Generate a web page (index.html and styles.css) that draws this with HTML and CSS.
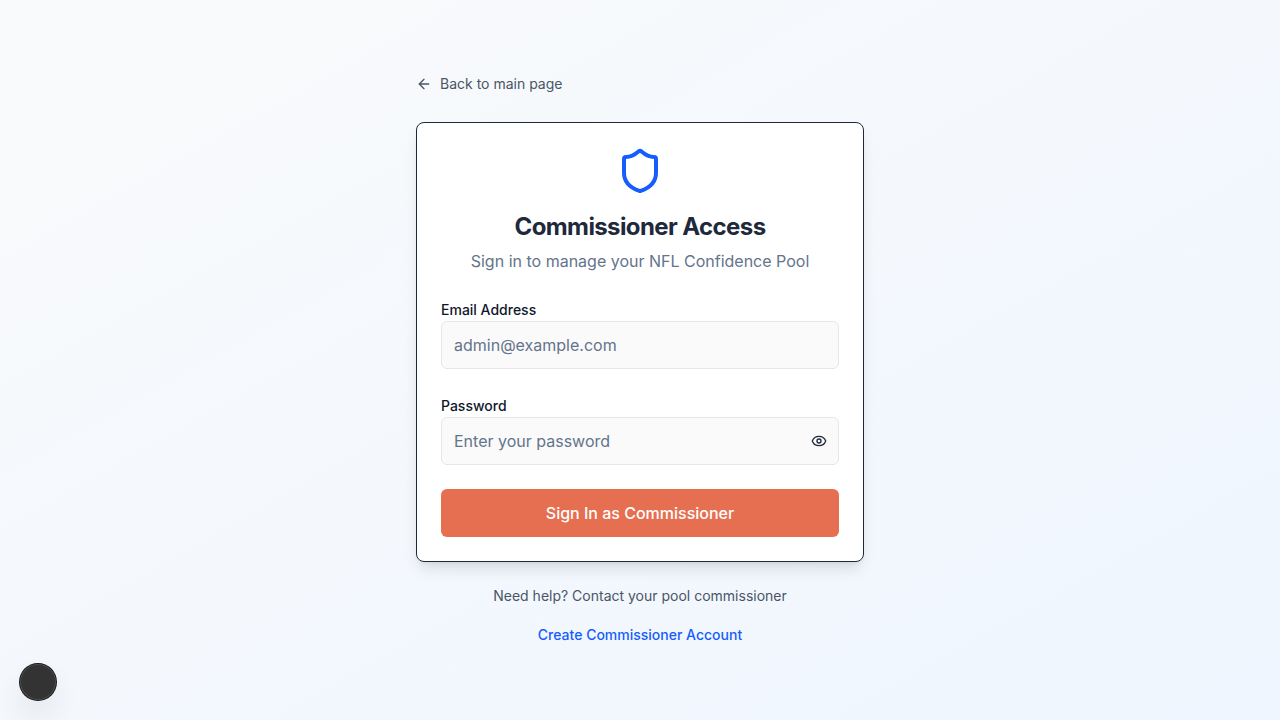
FILE: index.html
```html
<!DOCTYPE html>
<html lang="en">
<head>
<meta charset="utf-8">
<meta name="viewport" content="width=device-width, initial-scale=1">
<title>Commissioner Access</title>
<link rel="stylesheet" href="styles.css">
</head>
<body>
<main class="page">
  <div class="column">
    <a class="back-link" href="#">
      <svg class="icon" viewBox="0 0 24 24" aria-hidden="true"><path d="m12 19-7-7 7-7"/><path d="M19 12H5"/></svg>
      Back to main page
    </a>
    <section class="card">
      <header class="card-header">
        <svg class="shield" viewBox="0 0 24 24" aria-hidden="true"><path d="M20 13c0 5-3.5 7.5-7.66 8.95a1 1 0 0 1-.67-.01C7.5 20.5 4 18 4 13V6a1 1 0 0 1 1-1c2 0 4.5-1.2 6.24-2.72a1.17 1.17 0 0 1 1.52 0C14.51 3.81 17 5 19 5a1 1 0 0 1 1 1z"/></svg>
        <h1 class="title">Commissioner Access</h1>
        <p class="subtitle">Sign in to manage your NFL Confidence Pool</p>
      </header>
      <form class="form">
        <div class="field">
          <label class="label" for="email">Email Address</label>
          <input class="input" id="email" type="email" placeholder="admin@example.com">
        </div>
        <div class="field">
          <label class="label" for="password">Password</label>
          <div class="password-wrap">
            <input class="input input-password" id="password" type="password" placeholder="Enter your password">
            <button class="reveal" type="button" aria-label="Show password">
              <svg class="icon" viewBox="0 0 24 24" aria-hidden="true"><path d="M2.062 12.348a1 1 0 0 1 0-.696 10.75 10.75 0 0 1 19.876 0 1 1 0 0 1 0 .696 10.75 10.75 0 0 1-19.876 0"/><circle cx="12" cy="12" r="3"/></svg>
            </button>
          </div>
        </div>
        <button class="submit" type="submit">Sign In as Commissioner</button>
      </form>
    </section>
    <footer class="help">
      <p class="help-text">Need help? Contact your pool commissioner</p>
      <a class="create-link" href="#">Create Commissioner Account</a>
    </footer>
  </div>
</main>
<button class="floating" type="button" aria-label="Open tools"></button>
</body>
</html>
```

FILE: styles.css
```css
* {
  box-sizing: border-box;
  margin: 0;
}

body {
  font-family: Inter, "Liberation Sans", sans-serif;
  font-size: 16px;
  line-height: 24px;
  color: #1e293b;
}

.page {
  min-height: 100vh;
  display: flex;
  align-items: center;
  justify-content: center;
  padding: 16px 16px 18px;
  background: linear-gradient(to bottom right, #f9fafb, #eff6ff);
}

.column {
  width: 100%;
  max-width: 448px;
}

.icon {
  width: 16px;
  height: 16px;
  flex: none;
  fill: none;
  stroke: currentColor;
  stroke-width: 2;
  stroke-linecap: round;
  stroke-linejoin: round;
}

.back-link {
  display: flex;
  align-items: center;
  gap: 8px;
  width: fit-content;
  margin-bottom: 28px;
  font-size: 14px;
  line-height: 20px;
  color: #4a5565;
  text-decoration: none;
}

.card {
  padding: 24px;
  border: 1px solid #1e293b;
  border-radius: 8px;
  background: #fff;
  box-shadow: 0 10px 15px -3px rgb(0 0 0 / 10%), 0 4px 6px -4px rgb(0 0 0 / 10%);
}

.card-header {
  display: flex;
  flex-direction: column;
  align-items: center;
  text-align: center;
  margin-bottom: 24px;
}

.shield {
  width: 48px;
  height: 48px;
  margin-bottom: 16px;
  fill: none;
  stroke: #155dfc;
  stroke-width: 2;
  stroke-linecap: round;
  stroke-linejoin: round;
}

.title {
  margin-bottom: 6px;
  font-size: 24px;
  line-height: 32px;
  font-weight: 700;
  letter-spacing: -0.6px;
}

.subtitle {
  color: #64748b;
}

.form {
  display: flex;
  flex-direction: column;
  gap: 24px;
}

.label {
  font-size: 14px;
  line-height: 14px;
  font-weight: 500;
  color: #0f172a;
}

.input {
  display: block;
  width: 100%;
  height: 48px;
  padding: 8px 12px;
  border: 1px solid #e2e8f0;
  border-radius: 6px;
  background: #fafafa;
  font: inherit;
  color: inherit;
}

.input::placeholder {
  color: #64748b;
  opacity: 1;
}

.input-password {
  padding-right: 40px;
}

.password-wrap {
  position: relative;
}

.reveal {
  position: absolute;
  inset: 0 0 0 auto;
  display: flex;
  align-items: center;
  padding: 0 12px;
  border: 0;
  background: transparent;
  color: inherit;
}

.submit {
  height: 48px;
  border: 0;
  border-radius: 6px;
  background: #e76f51;
  color: #fff;
  font: inherit;
  font-weight: 500;
}

.help {
  display: flex;
  flex-direction: column;
  align-items: center;
  gap: 19px;
  margin-top: 24px;
  font-size: 14px;
  line-height: 20px;
  text-align: center;
}

.help-text {
  color: #4a5565;
}

.create-link {
  font-weight: 500;
  color: #155dfc;
  text-decoration: none;
}

.floating {
  position: fixed;
  left: 20px;
  bottom: 20px;
  width: 36px;
  height: 36px;
  border: 0;
  border-radius: 50%;
  background: #333;
  box-shadow: 0 0 0 1px #171717, inset 0 0 0 1px #4a4a4a, 0 16px 32px -8px rgb(0 0 0 / 24%);
}
```
